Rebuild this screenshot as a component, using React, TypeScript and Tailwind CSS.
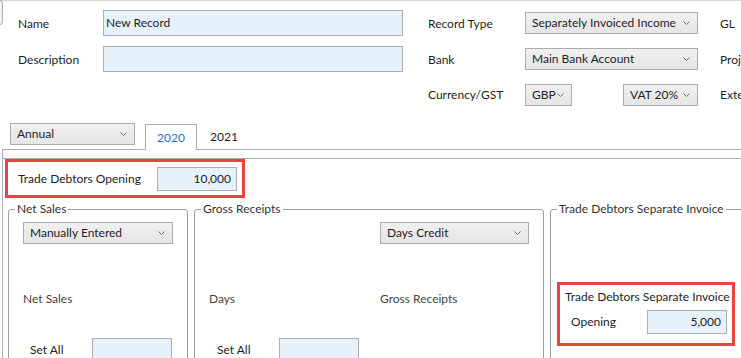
import React from 'react';

const font = { fontFamily: 'Lato, "Noto Sans", sans-serif' };

const Chevron: React.FC = () => (
  <svg width="7" height="4" viewBox="0 0 7 4" className="shrink-0">
    <path d="M0.5 0.5 L3.5 3.5 L6.5 0.5" fill="none" stroke="#6d6d6d" strokeWidth="1" />
  </svg>
);

const Select: React.FC<{ value: string; className?: string }> = ({ value, className = '' }) => (
  <div
    className={`shrink-0 h-[22px] flex items-center justify-between pl-[6px] pr-[7px] border border-[#acacac] bg-gradient-to-b from-[#f0f0f0] to-[#e5e5e5] text-[12px] text-[#1e1e1e] whitespace-nowrap ${className}`}
  >
    <span>{value}</span>
    <Chevron />
  </div>
);

const Input: React.FC<{ value?: string; right?: boolean; className?: string }> = ({ value = '', right, className = '' }) => (
  <div
    className={`shrink-0 flex items-center border border-[#abadb3] bg-[#e5f1fb] text-[12px] text-[#1e1e1e] ${right ? 'justify-end pr-[5px]' : 'pl-[2px]'} ${className}`}
  >
    {value}
  </div>
);

const Group: React.FC<{ title: string; className?: string; children: React.ReactNode }> = ({ title, className = '', children }) => (
  <fieldset className={`shrink-0 border border-[#9d9d9d] rounded-[3px] min-w-0 ${className}`}>
    <legend className="ml-[6px] px-[2px] text-[12px] leading-[16px] text-[#333]">{title}</legend>
    {children}
  </fieldset>
);

export default function App() {
  return (
    <div className="relative w-[741px] h-[358px] overflow-hidden bg-white text-[12px] text-[#1e1e1e]" style={font}>
      <div className="h-px bg-[#d6d6d6]" />
      <div className="absolute left-[-4px] top-0 w-[7px] h-[25px] border border-[#acacac] rounded-[3px] bg-[#f3f3f3]" />

      {/* header fields */}
      <div className="mt-[9px] pl-[18px] flex flex-col gap-[10px]">
        <div className="h-[26px] flex items-center">
          <span className="shrink-0 w-[85px] pt-[2px]">Name</span>
          <Input value="New Record" className="w-[300px] h-[26px]" />
          <span className="shrink-0 ml-[25px] w-[97px] pt-[2px]">Record Type</span>
          <Select value="Separately Invoiced Income" className="w-[173px]" />
          <span className="shrink-0 ml-[22px] pt-[2px]">GL</span>
        </div>
        <div className="h-[26px] flex items-center">
          <span className="shrink-0 w-[85px] pt-[1px]">Description</span>
          <Input className="w-[300px] h-[26px]" />
          <span className="shrink-0 ml-[25px] w-[97px] pt-[1px]">Bank</span>
          <Select value="Main Bank Account" className="w-[173px]" />
          <span className="shrink-0 ml-[22px] whitespace-nowrap pt-[1px]">Project</span>
        </div>
        <div className="h-[26px] flex items-center">
          <span className="shrink-0 w-[385px]" />
          <span className="shrink-0 ml-[25px] w-[97px]">Currency/GST</span>
          <Select value="GBP" className="w-[47px]" />
          <Select value="VAT 20%" className="ml-[51px] w-[75px]" />
          <span className="shrink-0 ml-[22px] whitespace-nowrap">External</span>
        </div>
      </div>

      {/* period + tabs */}
      <div className="mt-[15px] flex items-start">
        <Select value="Annual" className="ml-[10px] w-[125px] h-[21px]" />
        <div className="relative z-10 ml-[10px] mt-[1px] w-[52px] h-[26px] border border-b-0 border-[#acacac] bg-white flex items-center justify-center text-[#1a75c9]">
          2020
        </div>
        <div className="ml-[13px] mt-[1px] h-[25px] flex items-center">2021</div>
      </div>

      {/* tab content */}
      <div className="-mt-px ml-[2px] w-[760px] border-l border-t border-[#acacac] pt-[8px]">
        <div className="border-t border-[#acacac]">
          <div className="ml-[2px] w-[240px] h-[39px] border-[3px] border-[#e8463d] flex items-center pl-[10px] pr-[5px]">
            <span className="shrink-0 w-[139px] whitespace-nowrap">Trade Debtors Opening</span>
            <Input value="10,000" right className="w-[80px] h-[24px]" />
          </div>

          <div className="mt-[3px] ml-[5px] flex gap-[6px] items-start">
            <Group title="Net Sales" className="w-[180px] h-[200px]">
              <div className="pl-[14px] pt-[5px]">
                <Select value="Manually Entered" className="w-[150px] h-[21px]" />
                <div className="mt-[47px] leading-[16px] text-[#444]">Net Sales</div>
                <div className="mt-[31px] flex items-center">
                  <span className="shrink-0 ml-[7px] w-[62px]">Set All</span>
                  <Input className="w-[80px] h-[24px]" />
                </div>
              </div>
            </Group>

            <Group title="Gross Receipts" className="w-[350px] h-[200px]">
              <div className="pl-[14px] pt-[5px] grid grid-cols-[171px_149px]">
                <div />
                <Select value="Days Credit" className="w-[149px] h-[21px]" />
                <div className="mt-[47px] leading-[16px] text-[#444]">Days</div>
                <div className="mt-[47px] leading-[16px] text-[#444]">Gross Receipts</div>
                <div className="mt-[31px] flex items-center">
                  <span className="shrink-0 ml-[8px] w-[62px]">Set All</span>
                  <Input className="w-[80px] h-[24px]" />
                </div>
              </div>
            </Group>

            <Group title="Trade Debtors Separate Invoice" className="w-[220px] h-[200px]">
              <div className="pl-[6px] pt-[65px]">
                <div className="w-[178px] h-[64px] border-[3px] border-[#e8463d] pl-[5px] pt-[4px]">
                  <div className="leading-[16px] whitespace-nowrap">Trade Debtors Separate Invoice</div>
                  <div className="mt-[5px] flex items-center">
                    <span className="shrink-0 ml-[6px] w-[76px]">Opening</span>
                    <Input value="5,000" right className="w-[80px] h-[24px]" />
                  </div>
                </div>
              </div>
            </Group>
          </div>
        </div>
      </div>
    </div>
  );
}
